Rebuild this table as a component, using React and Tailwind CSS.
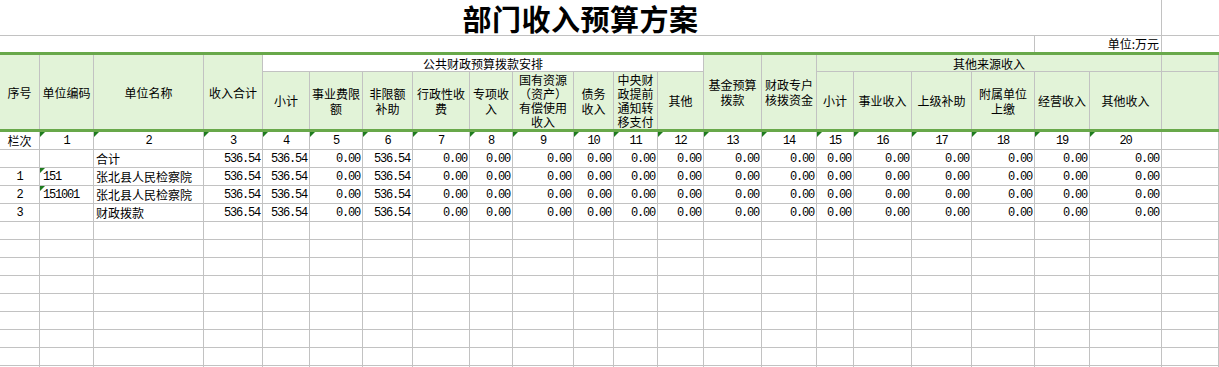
// 部门收入预算方案 — spreadsheet view
const COLS =
  'grid grid-cols-[40px_54px_110px_59px_47px_53px_50px_57px_43px_61px_40px_44px_46px_58px_55px_37px_58px_60px_63px_55px_72px_57px]';

const CJK = { fontFamily: '"Noto Sans CJK SC", "Noto Sans", sans-serif' };
const MONO = { fontFamily: '"Liberation Mono", "DejaVu Sans Mono", monospace' };

// second header row, public finance part
const publicCols = [
  ['小计'],
  ['事业费限', '额'],
  ['非限额', '补助'],
  ['行政性收', '费'],
  ['专项收', '入'],
  ['国有资源', '（资产）', '有偿使用', '收入'],
  ['债务', '收入'],
  ['中央财', '政提前', '通知转', '移支付'],
  ['其他'],
];

const otherCols = [['小计'], ['事业收入'], ['上级补助'], ['附属单位', '上缴'], ['经营收入'], ['其他收入']];

const nums = (v6) => ['536.54', '536.54', '0.00', v6, ...Array(14).fill('0.00')];

const rows = [
  { idx: '', code: '', name: '合计', vals: nums('536.54') },
  { idx: '1', code: '151', name: '张北县人民检察院', vals: nums('536.54'), mark: true },
  { idx: '2', code: '151001', name: '张北县人民检察院', vals: nums('536.54'), mark: true },
  { idx: '3', code: '', name: '财政拨款', vals: nums('536.54') },
];

const Mark = () => (
  <span className="absolute left-0 top-0 w-[5px] h-[5px] bg-[#1e7b1e] [clip-path:polygon(0_0,100%_0,0_100%)]" />
);

const Lines = ({ lines }) => (
  <span className={lines.length > 3 ? 'leading-[14px]' : 'leading-[15px]'}>
    {lines.map((l, i) => (
      <span key={i} className="block whitespace-nowrap">
        {l}
      </span>
    ))}
  </span>
);

const HeadCell = ({ lines, className = '' }) => (
  <div
    className={`flex items-center justify-center text-center overflow-hidden border-r border-[#c2c2c2] text-[12px] text-black ${className}`}
  >
    {lines && <Lines lines={lines} />}
  </div>
);

const cell = 'relative h-[18px] border-r border-b border-[#c2c2c2] flex items-center overflow-hidden';
const num = 'text-[12px] tracking-[-1.2px]';

const App = () => {
  return (
    <div className="w-[1219px] h-[367px] overflow-hidden bg-white" style={CJK}>
      {/* title */}
      <div className={COLS}>
        <div className="col-span-21 h-[36px] border-r border-b border-[#c2c2c2] flex items-center justify-center pt-[2px]">
          <span className="text-[29px] font-bold text-black leading-[33px] tracking-[0.5px]">部门收入预算方案</span>
        </div>
        <div className="h-[36px] border-b border-[#c2c2c2]" />
      </div>

      {/* unit row */}
      <div className={COLS}>
        <div className="col-span-19 h-[16px] border-r border-[#c2c2c2]" />
        <div className="col-span-2 h-[16px] border-r border-[#c2c2c2] flex items-center justify-end pr-[2px] text-[12px] leading-[16px]">
          单位:万元
        </div>
        <div className="h-[16px]" />
      </div>

      {/* header */}
      <div className={`${COLS} grid-rows-[17px_57px] border-y-[3px] border-[#68a84a] bg-[#e2f3d8]`}>
        <HeadCell lines={['序号']} className="row-span-2" />
        <HeadCell lines={['单位编码']} className="row-span-2" />
        <HeadCell lines={['单位名称']} className="row-span-2" />
        <HeadCell lines={['收入合计']} className="row-span-2" />
        <HeadCell lines={['公共财政预算拨款安排']} className="col-span-9 border-b bg-white" />
        <HeadCell lines={['基金预算', '拨款']} className="row-span-2" />
        <HeadCell lines={['财政专户', '核拨资金']} className="row-span-2" />
        <HeadCell lines={['其他来源收入']} className="col-span-6 border-b" />
        <HeadCell className="border-b" />
        {publicCols.map((l, i) => (
          <HeadCell key={'p' + i} lines={l} />
        ))}
        {otherCols.map((l, i) => (
          <HeadCell key={'o' + i} lines={l} />
        ))}
        <HeadCell />
      </div>

      {/* column numbers */}
      <div className={COLS}>
        <div className={`${cell} justify-center text-[12px]`}>栏次</div>
        {Array.from({ length: 20 }, (_, i) => (
          <div key={i} className={`${cell} justify-center ${num}`} style={MONO}>
            <Mark />
            {i + 1}
          </div>
        ))}
        <div className={cell} />
      </div>

      {/* data */}
      {rows.map((r, ri) => (
        <div key={ri} className={COLS}>
          <div className={`${cell} justify-center ${num}`} style={MONO}>
            {r.idx}
          </div>
          <div className={`${cell} pl-[3px] ${num}`} style={MONO}>
            {r.mark && <Mark />}
            {r.code}
          </div>
          <div className={`${cell} pl-[2px] text-[12px] whitespace-nowrap`}>{r.name}</div>
          {r.vals.map((v, i) => (
            <div key={i} className={`${cell} justify-end pr-[2px] ${num}`} style={MONO}>
              {v}
            </div>
          ))}
          <div className={cell} />
        </div>
      ))}

      {/* empty rows */}
      {Array.from({ length: 9 }, (_, ri) => (
        <div key={'e' + ri} className={COLS}>
          {Array.from({ length: 22 }, (_, i) => (
            <div key={i} className={cell} />
          ))}
        </div>
      ))}
    </div>
  );
};

export default App;
